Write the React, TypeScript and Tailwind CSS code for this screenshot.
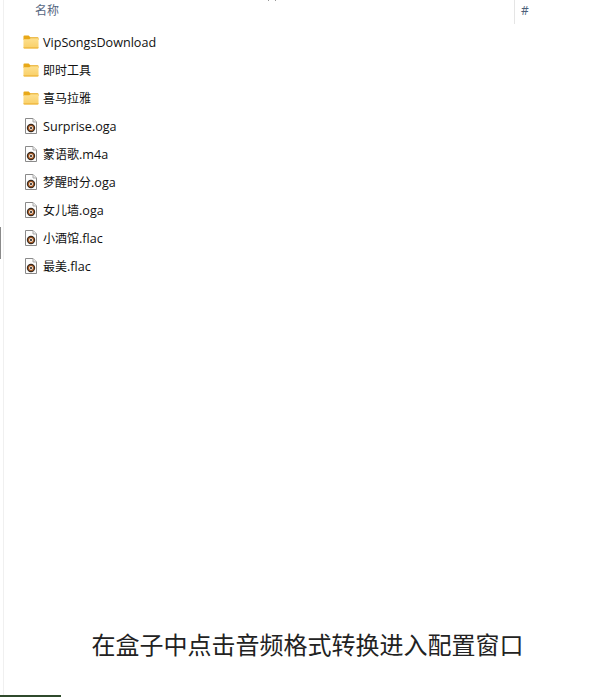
const FONT = "font-['Open_Sans','Noto_Sans_CJK_SC',sans-serif]";

function FolderIcon() {
  return (
    <svg width="16" height="14" viewBox="0 0 17 14" preserveAspectRatio="none" className="shrink-0">
      <path d="M0.5 1.5a1 1 0 0 1 1-1h4.5l1.8 1.8h7.7a1 1 0 0 1 1 1V5H0.5z" fill="#e8a818" />
      <defs>
        <linearGradient id="folderFill" x1="0" y1="0" x2="0" y2="1">
          <stop offset="0" stopColor="#fde08f" />
          <stop offset="1" stopColor="#f9cf66" />
        </linearGradient>
      </defs>
      <path d="M0.5 4.2h6.2l1.4-1h7.4a1 1 0 0 1 1 1v8.3a1 1 0 0 1-1 1H1.5a1 1 0 0 1-1-1z" fill="url(#folderFill)" />
      <path d="M0.5 12.2h16v0.3a1 1 0 0 1-1 1H1.5a1 1 0 0 1-1-1z" fill="#eeb740" />
    </svg>
  );
}

function AudioIcon() {
  return (
    <svg width="12" height="16" viewBox="0 0 12 16" className="shrink-0">
      <path d="M0.5 0.5h7.5l3.5 3.5v11.5H0.5z" fill="#fdfdfd" stroke="#8a8a8a" />
      <path d="M8 0.5V4h3.5" fill="#ececec" stroke="#a8a8a8" />
      <circle cx="6" cy="10" r="4.2" fill="#35291f" />
      <circle cx="6" cy="10" r="3.1" fill="#a85a24" />
      <circle cx="6" cy="10" r="2" fill="#efe6dc" />
      <circle cx="6" cy="10" r="1" fill="#1e1a18" />
    </svg>
  );
}

const rows: { cjk?: string; latin?: string; kind: "folder" | "audio" }[] = [
  { latin: "VipSongsDownload", kind: "folder" },
  { cjk: "即时工具", kind: "folder" },
  { cjk: "喜马拉雅", kind: "folder" },
  { latin: "Surprise.oga", kind: "audio" },
  { cjk: "蒙语歌", latin: ".m4a", kind: "audio" },
  { cjk: "梦醒时分", latin: ".oga", kind: "audio" },
  { cjk: "女儿墙", latin: ".oga", kind: "audio" },
  { cjk: "小酒馆", latin: ".flac", kind: "audio" },
  { cjk: "最美", latin: ".flac", kind: "audio" },
];

export default function App() {
  return (
    <div className={`relative w-[613px] h-[697px] overflow-hidden bg-white ${FONT}`}>
      <div className="absolute left-0 top-[227px] w-px h-[32px] bg-[#8a8a8a]" />
      <div className="absolute left-[268px] top-0 w-px h-px bg-[#999999]" />
      <div className="absolute left-[275px] top-0 w-px h-px bg-[#999999]" />
      <div className="ml-[3px] h-[695px] border-l border-[#f0f0f0] flex flex-col">
        <div className="flex h-6 shrink-0">
          <div className="w-[510px] pl-[31px] pt-[2px] text-[12px] leading-[17px] text-[#56677f]">名称</div>
          <div className="border-l border-[#e5e5e5] pl-[6px] pt-[2px] text-[12px] leading-[17px] text-[#4c607a]">#</div>
        </div>
        <div className="pt-1 flex flex-col">
          {rows.map((r) => (
            <div key={(r.cjk ?? "") + (r.latin ?? "")} className="h-7 flex items-center">
              {r.kind === "folder" ? (
                <div className="ml-[19px] w-[20px] flex"><FolderIcon /></div>
              ) : (
                <div className="ml-[21px] w-[18px] flex"><AudioIcon /></div>
              )}
              <span className="text-[12.6px] text-[#111111] leading-[17px]">
                {r.cjk && <span className="text-[12px]">{r.cjk}</span>}
                {r.latin}
              </span>
            </div>
          ))}
        </div>
        <div className="mt-auto h-[100px] flex justify-center pr-[2px] pt-[33px]">
          <span className="text-[24px] leading-[32px] text-[#222222] font-['Noto_Sans_CJK_SC',sans-serif]">在盒子中点击音频格式转换进入配置窗口</span>
        </div>
      </div>
      <div className="w-[61px] h-[2px] bg-[#2f4a2c]" />
    </div>
  );
}
